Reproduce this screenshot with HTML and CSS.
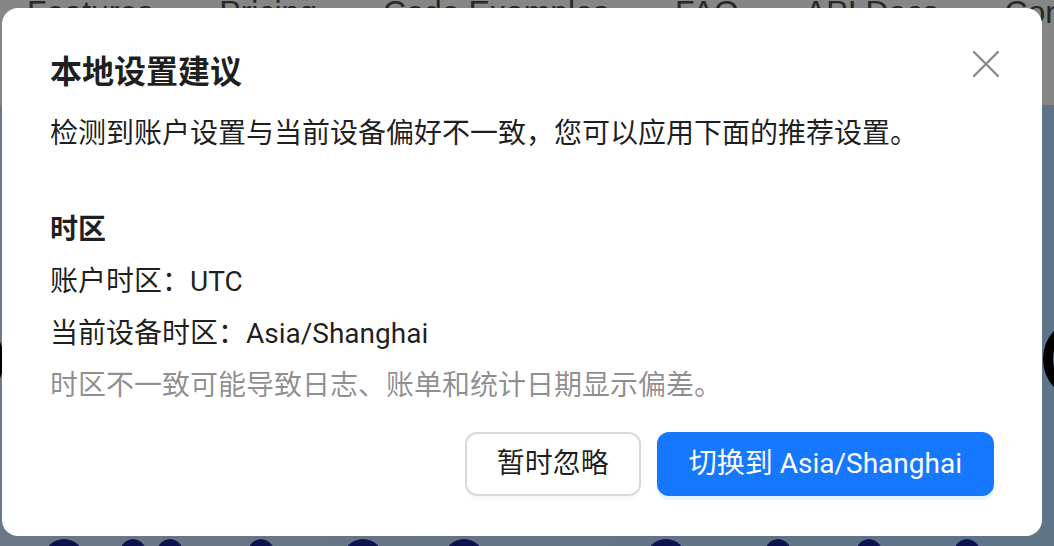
FILE: index.html
```html
<!DOCTYPE html>
<html lang="zh-CN">
<head>
<meta charset="utf-8">
<title>本地设置建议</title>
<link rel="stylesheet" href="styles.css">
</head>
<body>
<div class="page">
  <header class="site-header">
    <nav class="nav">
      <a class="nav-link">Features</a>
      <a class="nav-link">Pricing</a>
      <a class="nav-link">Code Examples</a>
      <a class="nav-link">FAQ</a>
      <a class="nav-link">API Docs</a>
      <a class="nav-link">Contact</a>
    </nav>
  </header>
  <section class="hero">
    <span class="ring ring-left"></span>
    <span class="ring ring-right"></span>
    <div class="dots">
      <span class="dot d1"></span><span class="dot d2"></span><span class="dot d3"></span><span class="dot d4"></span><span class="dot d5"></span><span class="dot d6"></span><span class="dot d7"></span><span class="dot d8"></span><span class="dot d9"></span><span class="dot d10"></span>
    </div>
  </section>
</div>

<div class="overlay">
  <div class="modal" role="dialog">
    <button class="modal-close" aria-label="关闭">
      <svg viewBox="0 0 26 26" width="26" height="26"><path d="M1 1 L25 25 M25 1 L1 25" stroke="currentColor" stroke-width="2.4" fill="none" stroke-linecap="square"/></svg>
    </button>
    <h2 class="modal-title">本地设置建议</h2>
    <p class="modal-desc">检测到账户设置与当前设备偏好不一致，您可以应用下面的推荐设置。</p>
    <div class="section">
      <h3 class="section-title">时区</h3>
      <p class="line">账户时区：UTC</p>
      <p class="line">当前设备时区：Asia/Shanghai</p>
      <p class="line note">时区不一致可能导致日志、账单和统计日期显示偏差。</p>
    </div>
    <div class="modal-footer">
      <button class="btn btn-default">暂时忽略</button>
      <button class="btn btn-primary">切换到 Asia/Shanghai</button>
    </div>
  </div>
</div>
</body>
</html>
```

FILE: styles.css
```css
* { box-sizing: border-box; }

html, body {
  margin: 0;
  padding: 0;
  width: 1054px;
  height: 546px;
  overflow: hidden;
}

body {
  font-family: "Roboto", "Noto Sans CJK SC", sans-serif;
  background: #ffffff;
}

.page {
  width: 1054px;
  height: 546px;
  display: flex;
  flex-direction: column;
}

.site-header {
  height: 105px;
  background: #f5f5f5;
  flex: none;
  overflow: hidden;
}

.nav {
  display: flex;
  gap: 66px;
  padding-left: 27px;
  margin-top: -4px;
  font-family: "Liberation Sans", Arial, sans-serif;
  font-size: 32px;
  line-height: 32px;
  white-space: nowrap;
}

.nav-link {
  color: #4a4a4a;
}

.hero {
  position: relative;
  flex: 1;
  background: linear-gradient(90deg, #c3daf4 0%, #b5d5f6 50%, #aad3fa 100%);
  overflow: hidden;
}

.ring {
  position: absolute;
  width: 84px;
  height: 84px;
  border: 10px solid #000;
  border-radius: 50%;
}
.ring-left { left: -80px; top: 213px; }
.ring-right { left: 1043px; top: 212px; }

.dots {
  position: absolute;
  left: 0;
  right: 0;
  top: 434px;
  display: flex;
  padding-left: 44px;
}
.dot {
  flex: none;
  width: 40px;
  height: 40px;
  border-radius: 50%;
  background: #1a2390;
}
.d2 { margin-left: 34px; width: 30px; }
.d3 { margin-left: 7px; width: 30px; }
.d4 { margin-left: 61px; width: 30px; }
.d5 { margin-left: 67px; }
.d6 { margin-left: 61px; }
.d7 { margin-left: 162px; }
.d8 { margin-left: 77px; width: 30px; }
.d9 { margin-left: 61px; width: 30px; }
.d10 { margin-left: 68px; width: 30px; }

.overlay {
  position: fixed;
  inset: 0;
  background: rgba(0, 0, 0, 0.45);
  padding: 8px 12px 10px 2px;
  display: flex;
}

.modal {
  position: relative;
  flex: 1;
  background: #ffffff;
  border-radius: 16px;
  padding: 40px 48px;
  color: rgba(0, 0, 0, 0.88);
}

.modal-close {
  position: absolute;
  top: 34px;
  right: 34px;
  width: 44px;
  height: 44px;
  padding: 0;
  border: 0;
  background: transparent;
  color: #8c8c8c;
  display: flex;
  align-items: center;
  justify-content: center;
}

.modal-title {
  margin: 0;
  font-size: 32px;
  line-height: 48px;
  font-weight: 600;
  color: rgba(0, 0, 0, 0.88);
}

.modal-desc {
  margin: 16px 0 0;
  font-size: 28px;
  line-height: 44px;
}

.section {
  margin-top: 52px;
}

.section-title {
  margin: 0;
  font-size: 28px;
  line-height: 44px;
  font-weight: 600;
}

.line {
  margin: 8px 0 0;
  font-size: 28px;
  line-height: 44px;
}

.note {
  color: rgba(0, 0, 0, 0.45);
}

.modal-footer {
  margin-top: 24px;
  display: flex;
  justify-content: flex-end;
  gap: 16px;
}

.btn {
  height: 64px;
  padding: 0 30px;
  border-radius: 12px;
  font-family: "Roboto", "Noto Sans CJK SC", sans-serif;
  font-size: 28px;
  line-height: 60px;
  cursor: pointer;
  white-space: nowrap;
}

.btn-default {
  background: #ffffff;
  border: 2px solid #d9d9d9;
  color: rgba(0, 0, 0, 0.88);
  box-shadow: 0 4px 0 rgba(0, 0, 0, 0.02);
}

.btn-primary {
  background: #1677ff;
  border: 2px solid #1677ff;
  color: #ffffff;
  box-shadow: 0 4px 0 rgba(5, 145, 255, 0.1);
}
```
